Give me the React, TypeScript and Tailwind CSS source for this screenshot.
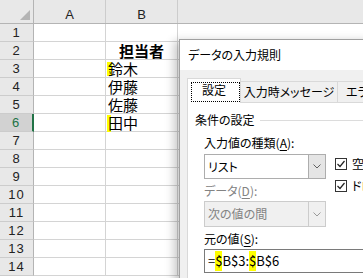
const rows = [
  { n: 1, b: "" },
  { n: 2, b: "担当者", bold: true },
  { n: 3, b: "鈴木", mark: "top-[2px] h-[14px] w-[5px]" },
  { n: 4, b: "伊藤" },
  { n: 5, b: "佐藤" },
  { n: 6, b: "田中", mark: "top-[1px] h-[17px] w-[4px]", selected: true },
  { n: 7, b: "" },
  { n: 8, b: "" },
  { n: 9, b: "" },
  { n: 10, b: "" },
  { n: 11, b: "" },
  { n: 12, b: "" },
  { n: 13, b: "" },
  { n: 14, b: "" },
];

function Chevron({ color }: { color: string }) {
  return (
    <svg width="8" height="5" viewBox="0 0 8 5">
      <path d="M0.5 0.5 L4 4 L7.5 0.5" fill="none" stroke={color} strokeWidth="1" />
    </svg>
  );
}

function Check() {
  return (
    <div className="shrink-0 w-[12px] h-[12px] border border-[#333333] bg-white flex items-center justify-center">
      <svg width="10" height="10" viewBox="0 0 10 10">
        <path d="M1.5 5 L4 7.5 L8.5 2" fill="none" stroke="#222222" strokeWidth="1.2" />
      </svg>
    </div>
  );
}

function Dialog() {
  return (
    <div className="absolute left-[179px] top-[39px] w-[240px] h-[260px] border border-[#a0a0a0] bg-[#f0f0f0] shadow-[-5px_2px_9px_rgba(0,0,0,0.22)] text-[12px] text-black [font-feature-settings:'palt']">
      <div className="h-[30px] bg-white pl-[8px] flex items-center">データの入力規則</div>

      <div className="pt-[8px] pl-[7px]">
        <div className="flex items-end h-[24px]">
          <div className="relative z-10 shrink-0 w-[54px] h-[25px] -mb-px bg-white border-l border-t border-r border-[#d9d9d9] flex items-center justify-center pb-[2px]">
            <div className="absolute left-[3px] top-[3px] right-[0px] bottom-[1px] border border-dotted border-black" />
            設定
          </div>
          <div className="shrink-0 w-[97px] h-[21px] border-t border-r border-[#d9d9d9] flex items-center justify-center">
            入力時メッセージ
          </div>
          <div className="shrink-0 w-[80px] h-[21px] border-t border-[#d9d9d9] pl-[8px] flex items-center whitespace-nowrap">
            エラー メッセージ
          </div>
        </div>

        <div className="bg-white border border-[#d9d9d9] h-[200px] pl-[7px]">
          <div className="mt-[10px] h-[14px] flex items-center">
            <span className="leading-[14px]">条件の設定</span>
            <div className="flex-1 h-px bg-[#dcdcdc] ml-[5px]" />
          </div>

          <div className="flex pl-[9px] mt-[9px]">
            <div className="shrink-0 flex flex-col w-[122px]">
              <div className="h-[14px] leading-[14px] whitespace-nowrap">
                入力値の種類(<u className="underline-offset-2">A</u>):
              </div>
              <div className="mt-[4px] h-[25px] border border-[#adadad] bg-white flex">
                <div className="flex-1 pl-[3px] flex items-center">リスト</div>
                <div className="w-[17px] border-l border-[#adadad] bg-[#e5e5e5] flex items-center justify-center">
                  <Chevron color="#606060" />
                </div>
              </div>

              <div className="mt-[5px] h-[14px] leading-[14px] text-[#838383] whitespace-nowrap">
                データ(<u className="underline-offset-2">D</u>):
              </div>
              <div className="mt-[3px] h-[26px] border border-[#cccccc] bg-[#f0f0f0] flex text-[#838383]">
                <div className="flex-1 pl-[3px] flex items-center">次の値の間</div>
                <div className="w-[17px] border-l border-[#cccccc] flex items-center justify-center">
                  <Chevron color="#9a9a9a" />
                </div>
              </div>

              <div className="mt-[5px] h-[14px] leading-[14px] whitespace-nowrap">
                元の値(<u className="underline-offset-2">S</u>):
              </div>
            </div>

            <div className="shrink-0 ml-[9px] mt-[22px] flex flex-col gap-[10px] whitespace-nowrap">
              <div className="flex items-center gap-[5px] h-[12px]">
                <Check />
                <span>空白を無視する(B)</span>
              </div>
              <div className="flex items-center gap-[5px] h-[12px]">
                <Check />
                <span>ドロップダウン リストから選択する(I)</span>
              </div>
            </div>
          </div>

          <div className="ml-[9px] mt-[3px] h-[24px] w-[200px] border border-[#7a7a7a] pl-[3px] flex items-center text-[13px] [font-feature-settings:normal]">
            =<span className="bg-[#ffff00]">$</span>B$3:<span className="bg-[#ffff00]">$</span>B$6
          </div>
        </div>
      </div>
    </div>
  );
}

export default function App() {
  return (
    <div className="relative w-[363px] h-[278px] overflow-hidden bg-white font-['Noto_Sans_CJK_JP',sans-serif]">
      <div className="flex flex-col">
        <div className="flex h-[24px] bg-[#e8e8e8] border-b border-[#b4b4b4] font-['Liberation_Sans',sans-serif] text-[13px] text-[#222222]">
          <div className="relative w-[34px] border-r border-[#b4b4b4]">
            <svg className="absolute left-[20px] top-[10px]" width="10" height="10" viewBox="0 0 10 10">
              <path d="M10 0 L10 10 L0 10 Z" fill="#b4b4b4" />
            </svg>
          </div>
          <div className="w-[72px] border-r border-[#cccccc] flex items-end justify-center pb-[1px] leading-[15px]">A</div>
          <div className="w-[72px] border-r border-[#cccccc] flex items-end justify-center pb-[1px] leading-[15px]">B</div>
          <div className="flex-1" />
        </div>

        {rows.map((r) => (
          <div key={r.n} className="flex h-[18px]">
            <div
              className={
                r.selected
                  ? "w-[34px] bg-[#d2d2d2] border-b border-b-[#cccccc] border-r-2 border-r-[#217346] text-[#217346] flex items-center justify-center font-['Liberation_Sans',sans-serif] text-[13px] tracking-[1px] leading-[15px]"
                  : "w-[34px] bg-[#e8e8e8] border-b border-b-[#cccccc] border-r border-r-[#b4b4b4] text-[#222222] flex items-center justify-center font-['Liberation_Sans',sans-serif] text-[13px] tracking-[1px] leading-[15px]"
              }
            >
              {r.n}
            </div>
            <div className="w-[72px] border-r border-b border-[#d4d4d4]" />
            <div
              className={
                r.bold
                  ? "relative w-[72px] border-r border-b border-[#d4d4d4] flex items-end justify-center text-[15px] font-bold leading-[16px]"
                  : "relative w-[72px] border-r border-b border-[#d4d4d4] flex items-end pl-[2px] text-[15px] leading-[16px]"
              }
            >
              {r.mark && <span className={"absolute left-[1px] bg-[#ffff00] " + r.mark} />}
              <span className="relative">{r.b}</span>
            </div>
            <div className="flex-1 border-b border-[#d4d4d4]" />
          </div>
        ))}
      </div>
      <Dialog />
    </div>
  );
}
